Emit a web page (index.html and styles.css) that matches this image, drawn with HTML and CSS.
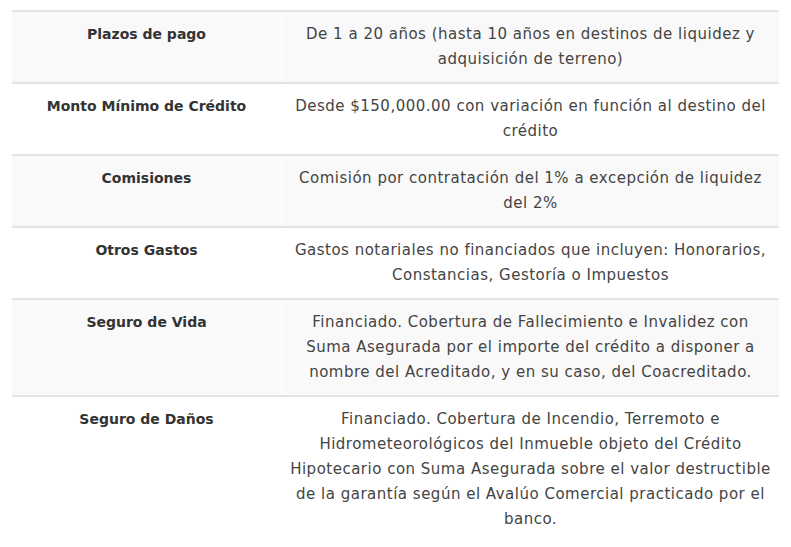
FILE: index.html
```html
<!DOCTYPE html>
<html lang="es">
<head>
<meta charset="utf-8">
<title>Condiciones del crédito</title>
<link rel="stylesheet" href="styles.css">
</head>
<body>
<div class="wrap">
  <table class="terms">
    <tbody>
      <tr>
        <th>Plazos de pago</th>
        <td>De 1 a 20 años (hasta 10 años en destinos de liquidez y adquisición de terreno)</td>
      </tr>
      <tr>
        <th>Monto Mínimo de Crédito</th>
        <td>Desde $150,000.00 con variación en función al destino del crédito</td>
      </tr>
      <tr>
        <th>Comisiones</th>
        <td>Comisión por contratación del 1% a excepción de liquidez del 2%</td>
      </tr>
      <tr>
        <th>Otros Gastos</th>
        <td>Gastos notariales no financiados que incluyen: Honorarios, Constancias, Gestoría o Impuestos</td>
      </tr>
      <tr>
        <th>Seguro de Vida</th>
        <td>Financiado. Cobertura de Fallecimiento e Invalidez con Suma Asegurada por el importe del crédito a disponer a nombre del Acreditado, y en su caso, del Coacreditado.</td>
      </tr>
      <tr>
        <th>Seguro de Daños</th>
        <td>Financiado. Cobertura de Incendio, Terremoto e Hidrometeorológicos del Inmueble objeto del Crédito Hipotecario con Suma Asegurada sobre el valor destructible de la garantía según el Avalúo Comercial practicado por el banco.</td>
      </tr>
    </tbody>
  </table>
</div>
</body>
</html>
```
FILE: styles.css
```css
html, body {
  margin: 0;
  padding: 0;
  background: #ffffff;
}
.wrap {
  padding: 10px 12px 0 12px;
}
.terms {
  width: 100%;
  border-collapse: collapse;
  font-family: "DejaVu Sans", "Noto Sans", sans-serif;
  font-size: 15px;
  line-height: 25px;
}
.terms tr {
  border-top: 2px solid #e4e4e4;
}
.terms tr:nth-child(odd) {
  background: #f9f9f9;
}
.terms th,
.terms td {
  padding: 10px 8px;
  text-align: center;
  vertical-align: top;
}
.terms th {
  width: 253px;
  font-size: 14px;
  font-weight: 700;
  color: #333333;
}
.terms td {
  font-weight: 400;
  letter-spacing: 0.5px;
  color: #444444;
  border-left: 1px solid #ffffff;
}
```
